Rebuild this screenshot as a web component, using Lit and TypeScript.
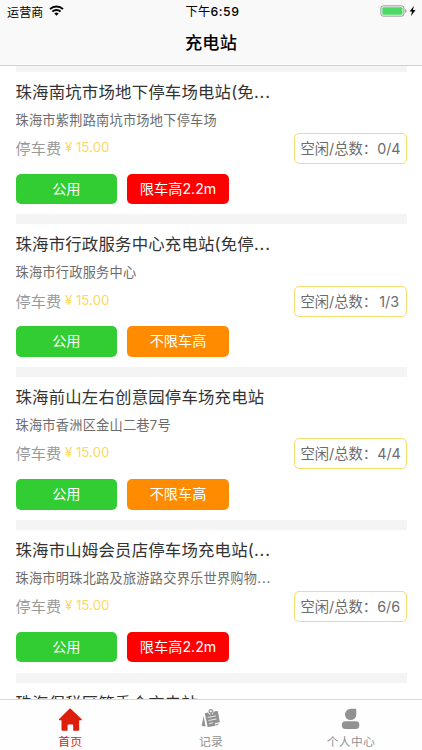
import { LitElement, html, css, svg, nothing } from "lit";
import { customElement, property } from "lit/decorators.js";

interface Station {
  name: string;
  more?: boolean;
  detail?: { address: string; more?: boolean; free: string; limit: string; limited: boolean };
}

const STATIONS: Station[] = [
  { name: "珠海南坑市场地下停车场电站(免", more: true, detail: { address: "珠海市紫荆路南坑市场地下停车场", free: "0/4", limit: "限车高2.2m", limited: true } },
  { name: "珠海市行政服务中心充电站(免停", more: true, detail: { address: "珠海市行政服务中心", free: "1/3", limit: "不限车高", limited: false } },
  { name: "珠海前山左右创意园停车场充电站", detail: { address: "珠海市香洲区金山二巷7号", free: "4/4", limit: "不限车高", limited: false } },
  { name: "珠海市山姆会员店停车场充电站(", more: true, detail: { address: "珠海市明珠北路及旅游路交界乐世界购物", more: true, free: "6/6", limit: "限车高2.2m", limited: true } },
  { name: "珠海保税区管委会充电站" },
];

@customElement("station-card")
export class StationCard extends LitElement {
  @property({ attribute: false }) station!: Station;

  static styles = css`
    :host { display: block; height: 152.75px; box-sizing: border-box; border-top: 10.25px solid #f4f4f4; color: #333; }
    .name { margin-top: 8px; height: 25px; line-height: 25px; font-size: 16.4px; letter-spacing: 0.2px; white-space: nowrap; }
    .dots { letter-spacing: 0.9px; }
    .address { margin-top: 5px; height: 20px; line-height: 20px; font-size: 13.2px; letter-spacing: 0.24px; color: #6c6c6c; white-space: nowrap; }
    .row { display: flex; justify-content: space-between; height: 31px; margin-top: 3.25px; }
    .fee { display: flex; align-items: center; height: 28px; font-size: 15.2px; letter-spacing: 0.1px; color: #999; white-space: nowrap; }
    .yen { width: 11px; margin-left: 3.5px; font-size: 13.2px; letter-spacing: 0; color: #fbd95f; }
    .price { font-size: 13.3px; letter-spacing: 0.05px; color: #fbd95f; }
    .free { box-sizing: border-box; width: 112.5px; height: 31px; border: 1px solid #f8dc70; border-radius: 5px; display: flex; align-items: baseline; justify-content: space-between; padding: 0 6.5px 0 5.5px; font-size: 14.3px; line-height: 29px; color: #6c6c6c; white-space: nowrap; }
    .tags { display: flex; gap: 10px; margin-top: 9.75px; }
    .tag { width: 101.7px; height: 30.5px; border-radius: 5px; color: #fff; font-size: 14.2px; letter-spacing: 0; line-height: 30.5px; text-align: center; background: #ff8c00; }
    .tag.open { background: #32cd32; }
    .tag.limited { background: #ff0000; }
  `;

  render() {
    const { name, more, detail } = this.station;
    const dots = html`<span class="dots">...</span>`;
    return html`
      <div class="name">${name}${more ? dots : nothing}</div>
      ${detail
        ? html`
            <div class="address">${detail.address}${detail.more ? dots : nothing}</div>
            <div class="row">
              <div class="fee">停车费<span class="yen">¥</span><span class="price">15.00</span></div>
              <div class="free"><span>空闲/总数：</span><span>${detail.free}</span></div>
            </div>
            <div class="tags">
              <div class="tag open">公用</div>
              <div class="tag ${detail.limited ? "limited" : ""}">${detail.limit}</div>
            </div>
          `
        : nothing}
    `;
  }
}

const home = svg`<path d="M12.4 .6 23.5 11q.8 1-.3 1.2h-2v9.2q0 1.3-1.3 1.3h-4.7v-5.3q0-1-1-1h-3.6q-1 0-1 1v5.3H4.8q-1.3 0-1.3-1.3v-9.2h-2Q.4 12 1.2 11L11.4.7q.5-.5 1-.1Z"/>`;
const record = svg`
  <path d="M4.6 8.2 6.6 18.6 3.4 17.9q-.7-.2-.6-.9Z"/>
  <path d="M6.5 5 18 2.9q.8-.1.9.6l1.9 10.7-4.7.9.5 2.7-7.2 1.3q-.8.1-.9-.6L5.9 5.8q-.1-.7.6-.8Z"/>
  <path d="m20.2 15.4-2.8 2.3-.3-1.7Z"/>
  <path d="m8.8 9.4 8.2-1.5M9.4 12.5l8.2-1.5M9.9 15.5l4.2-.8" fill="none" stroke="#fefefe" stroke-width=".8"/>
  <circle cx="11.8" cy="4" r="2.6" fill="#fefefe"/>
  <circle cx="11.8" cy="3.4" r="1.7" fill="none" stroke="currentColor" stroke-width="1.2"/>
  <path d="m11.9 4.2.5 3" fill="none" stroke="currentColor" stroke-width="1.3"/>`;
const person = svg`<path d="M11.7.8h4.8q.8 0 .8.8v4.9A5.65 5.65 0 1 1 11.7.8Z"/><rect x="2.9" y="13.3" width="17.4" height="7.6" rx="3.4"/>`;

@customElement("app-root")
export class AppRoot extends LitElement {
  static styles = css`
    :host { display: flex; flex-direction: column; height: 750px; width: 422px; overflow: hidden; background: #fff; font-family: Inter, "Noto Sans CJK SC", sans-serif; }
    .header { flex: none; box-sizing: border-box; height: 66px; background: #f9f9f9; border-bottom: 1px solid #d2d2d2; color: #000; }
    .status { display: grid; grid-template-columns: 1fr auto 1fr; align-items: center; height: 22px; padding: 0 5px 0 7px; font-size: 12px; }
    .carrier { display: flex; align-items: center; gap: 6px; letter-spacing: 0.15px; }
    .carrier svg { margin-top: -2px; }
    .time { font-size: 12.3px; letter-spacing: 0.2px; padding-left: 1px; }
    .clock { font-weight: 500; letter-spacing: 0.55px; }
    .power { display: flex; justify-content: flex-end; align-items: center; }
    .title { height: 43px; line-height: 42px; text-align: center; font-size: 17.2px; font-weight: 500; letter-spacing: 0.1px; }
    .list { flex: 1; min-height: 0; overflow: hidden; padding: 0 15.5px; }
    .cards { margin-top: -4.5px; }
    .tabs { flex: none; box-sizing: border-box; height: 51px; display: grid; grid-template-columns: repeat(3, 1fr); background: #fefefe; border-top: 1px solid #d9d9d9; }
    .tab { display: flex; flex-direction: column; align-items: center; padding-top: 8px; color: #929292; fill: currentColor; font-size: 11.8px; letter-spacing: 0.3px; line-height: 20px; }
    .tab:last-child { padding-right: 1.5px; }
    .tab svg { display: block; flex: none; }
    .tab.active { color: #dc1e0c; }
  `;

  render() {
    return html`
      <div class="header">
        <div class="status">
          <div class="carrier">运营商
            <svg width="15" height="11" viewBox="0 0 15 11" fill="none" stroke="#000" stroke-width="2">
              <path d="M1 4.1a9.3 9.3 0 0 1 13 0M3.4 6.6a5.8 5.8 0 0 1 8.2 0"/>
              <path d="M7.5 10.7 5.3 8.5a3.1 3.1 0 0 1 4.4 0Z" fill="#000" stroke="none"/>
            </svg>
          </div>
          <div class="time">下午<span class="clock">6:59</span></div>
          <div class="power">
            <svg width="37" height="12" viewBox="0 0 37 12">
              <rect x=".9" y=".9" width="23" height="10.2" rx="2.2" fill="#fff" stroke="#929292"/>
              <rect x="2.3" y="2.3" width="20.2" height="7.4" rx="1" fill="#4cd964"/>
              <path d="M25.2 4.1q1.3.5 1.3 1.9t-1.3 1.9Z" fill="#929292"/>
              <path d="m34 .8-4.4 5.8h2.5l-1.2 4.6 4.6-6.1h-2.6Z"/>
            </svg>
          </div>
        </div>
        <div class="title">充电站</div>
      </div>
      <div class="list"><div class="cards">
        ${STATIONS.map((s) => html`<station-card .station=${s}></station-card>`)}
      </div></div>
      <div class="tabs">
        <div class="tab active"><svg width="24" height="24" viewBox="0 0 24 24">${home}</svg>首页</div>
        <div class="tab"><svg width="24" height="24" viewBox="0 0 24 24">${record}</svg>记录</div>
        <div class="tab"><svg width="24" height="24" viewBox="0 0 24 24">${person}</svg>个人中心</div>
      </div>
    `;
  }
}
